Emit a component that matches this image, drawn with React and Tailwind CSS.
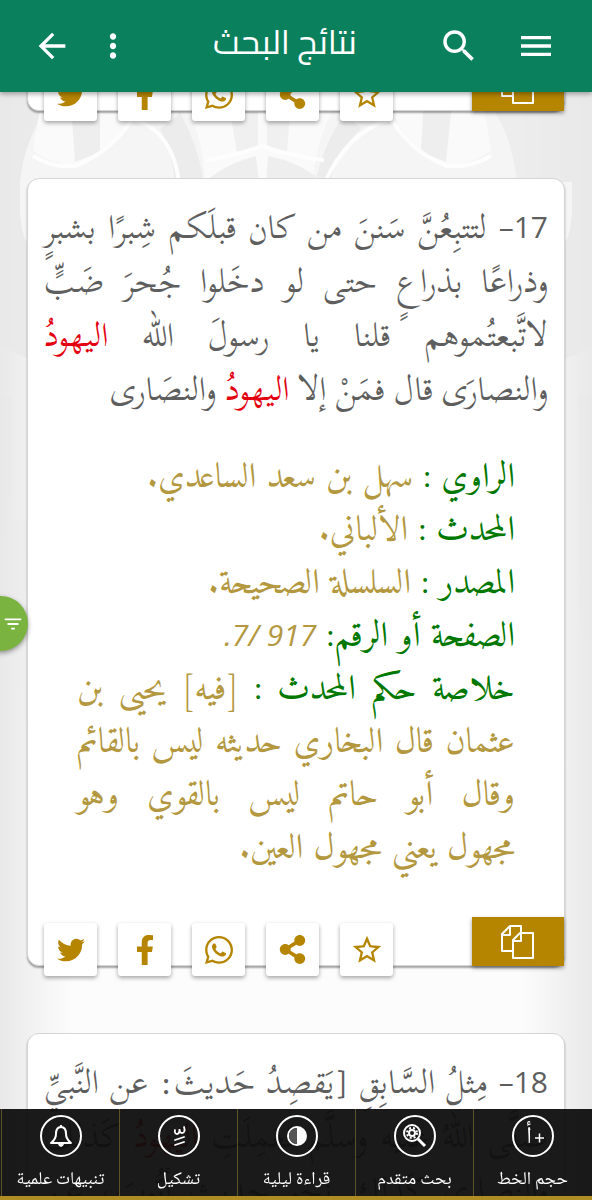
import { MdMenu, MdSearch, MdMoreVert, MdArrowBack, MdFilterList, MdStarBorder } from 'react-icons/md';
import { FaTwitter, FaFacebookF, FaWhatsapp, FaShareAlt } from 'react-icons/fa';

const shareActions = [
  { label: 'المفضلة', Icon: MdStarBorder, size: 34 },
  { label: 'مشاركة', Icon: FaShareAlt, size: 29 },
  { label: 'واتساب', Icon: FaWhatsapp, size: 32 },
  { label: 'فيسبوك', Icon: FaFacebookF, size: 30 },
  { label: 'تويتر', Icon: FaTwitter, size: 28 },
];

function CopyIcon() {
  return (
    <svg width="34" height="34" viewBox="0 0 34 34" fill="none" stroke="#fff" strokeWidth="2" strokeLinejoin="round" aria-hidden="true">
      <path d="M12 26H1V9l8-8h11v7M1 10h8V1" />
      <path d="M12 15l7-7h13v25H12zM12 16h8V8" />
    </svg>
  );
}

function CardActions() {
  return (
    <footer className="flex h-12 items-start justify-between pl-4">
      <button type="button" aria-label="نسخ" className="flex h-[49px] w-[92px] items-center justify-center bg-[#b58500] shadow-[0_2px_4px_rgba(0,0,0,0.4)]">
        <CopyIcon />
      </button>
      <div className="flex gap-[21px] pt-[6px]">
        {shareActions.map(({ label, Icon, size }) => (
          <button key={label} type="button" aria-label={label} className="flex h-[53px] w-[53px] items-center justify-center rounded-[3px] bg-white text-[#b58500] shadow-[0_2px_4px_rgba(0,0,0,0.35)]">
            <Icon size={size} />
          </button>
        ))}
      </div>
    </footer>
  );
}

function Card({ className = '', children }) {
  return (
    <article className={`mx-[27px] rounded-xl border border-[#d5d5d5] bg-white shadow-[0_2px_2px_rgba(0,0,0,0.35)] ${className}`}>
      {children}
      <CardActions />
    </article>
  );
}

function Num({ children }) {
  return <span className="font-['Open_Sans','Noto_Sans',sans-serif] text-[30px] leading-none">{children}</span>;
}

function Hadith({ number, children }) {
  return (
    <p className="px-4 pt-[22px] text-justify font-['Scheherazade_New','Amiri',serif] text-[33px] leading-[54px] text-[#5e5e5e]">
      <Num>{number}–</Num> {children}
    </p>
  );
}

function Hit({ children }) {
  return <mark className="bg-transparent text-[#e3000f]">{children}</mark>;
}

function Phrase({ children }) {
  return <span className="whitespace-nowrap">{children}</span>;
}

function Field({ label, children }) {
  return (
    <div>
      <dt className="inline text-[#007800]">{label}</dt>{' '}
      <dd className="inline">{children}</dd>
    </div>
  );
}

function Backdrop() {
  return (
    <svg className="absolute inset-0 -z-10 h-full w-full" viewBox="0 92 592 1108" preserveAspectRatio="none" aria-hidden="true">
      <defs>
        <linearGradient id="edge" x1="0" x2="1" y1="0" y2="0">
          <stop offset="0" stopColor="#e9e9e9" />
          <stop offset="0.12" stopColor="#fcfcfc" />
          <stop offset="0.88" stopColor="#fcfcfc" />
          <stop offset="1" stopColor="#e9e9e9" />
        </linearGradient>
        <linearGradient id="fade" x1="0" x2="0" y1="0" y2="1">
          <stop offset="0" stopColor="#e8e8e8" />
          <stop offset="1" stopColor="#e8e8e8" stopOpacity="0" />
        </linearGradient>
      </defs>
      <rect y="92" width="592" height="1108" fill="url(#edge)" />
      <path d="M0 92h592v252q-14 12-28 14H28q-14-4-28-14z" fill="#e9e9e9" opacity="0.8" />
      <path d="M20 182q4-40 25-70h450q18 30 22 70h55v30q-2 30-10 32H30q-8-2-10-32z" fill="#f5f5f5" />
      <path d="M33 150q4-30 12-58h95q-12 48-65 74-30-4-42-16zM491 150q-4-30-12-58h-95q12 48 63 74 32-4 44-16z" fill="#fafafa" />
      <path d="M70 92h30v60l-25 10zM453 92h-29l-3 60 25 10z" fill="#eee" />
      <path d="M180 92h165q-30 40-32 90H205q-2-50-25-90z" fill="#fafafa" />
      <path d="M160 128q12-6 20-16 18 34 24 70h-29q-3-30-15-54zM362 128q-10-6-16-16-24 34-30 70h14q6-30 32-54z" fill="#ececec" />
      <path d="M230 112h28v34l-21 7zM267 112h23l-3 41-20-7z" fill="#f0f0f0" />
      <path d="M205 182q20-18 51-26l3 26zM266 182l2-26q32 6 55 26z" fill="#eee" />
      <path d="M33 156q20 12 42 10 38-14 62-54M491 156q-20 12-44 10-38-14-60-54M137 120q36 14 42 62M387 120q-40 14-62 62M205 160q30-4 57-14 27 10 62 14" fill="none" stroke="#fdfdfd" strokeWidth="4" />
      <path d="M0 395h12v240H0zM12 520h18v235l-18 10zM592 395h-14v240h14z" fill="url(#fade)" opacity="0.5" />
    </svg>
  );
}

const ring = { fill: 'none', stroke: '#fff', strokeWidth: 2 };

const tools = [
  {
    label: 'حجم الخط',
    art: (
      <>
        <text x="18" y="29" fontSize="24" fill="#fff" textAnchor="middle" className="font-['Noto_Naskh_Arabic','DejaVu_Sans',sans-serif]">أ</text>
        <path d="M24 24h9M28.500 19.500v9" stroke="#fff" strokeWidth="1.500" />
      </>
    ),
  },
  {
    label: 'بحث متقدم',
    art: (
      <>
        <circle cx="19" cy="19" r="8" {...ring} />
        <circle cx="19" cy="19" r="3" {...ring} />
        <circle cx="19" cy="19" r="5" {...ring} strokeDasharray="2 2" />
        <path d="M25 25l7 7" stroke="#fff" strokeWidth="3" />
      </>
    ),
  },
  {
    label: 'قراءة ليلية',
    art: (
      <>
        <circle cx="22" cy="22" r="9" {...ring} />
        <path d="M22 13a9 9 0 0 1 0 18z" fill="#fff" />
        <path d="M22 14a8 8 0 0 0 0 16z" fill="#555" />
      </>
    ),
  },
  {
    label: 'تشكيل',
    art: (
      <g fill="none" stroke="#fff" strokeWidth="1.800" strokeLinecap="round">
        <path d="M27 13c1.500 4 0 6-2 6s-2.500-2-2.500-4c0 3-.5 5-2.500 5s-2.500-2-2-4" />
        <path d="M18 26l9-3M18 31l9-3" />
      </g>
    ),
  },
  {
    label: 'تنبيهات علمية',
    art: (
      <>
        <path d="M12 29q5-4 5-9 0-7 5-7t5 7q0 5 5 9zM22 13v-2" {...ring} strokeLinejoin="round" />
        <path d="M19 30h6q-1 3-3 3t-3-3z" fill="#fff" />
      </>
    ),
  },
];

function Toolbar() {
  return (
    <nav className="fixed inset-x-0 bottom-0 z-20 flex h-[91px] border-b-4 border-[#b08c25] bg-[#0e0e0e]/95 px-px">
      {tools.map(({ label, art }) => (
        <button key={label} type="button" className="flex flex-1 flex-col items-center border-l border-[#5c5428] pt-[5px] text-white">
          <svg width="44" height="44" viewBox="0 0 44 44" aria-hidden="true">
            <circle cx="22" cy="22" r="20" {...ring} />
            {art}
          </svg>
          <span className="mt-2 font-['Noto_Naskh_Arabic','DejaVu_Sans',sans-serif] text-[18px] leading-7 whitespace-nowrap">{label}</span>
        </button>
      ))}
    </nav>
  );
}

export default function App() {
  return (
    <div dir="rtl" lang="ar" className="flex h-screen flex-col overflow-hidden">
      <header className="z-20 flex h-[92px] shrink-0 items-center justify-between bg-[#0a805d] px-9 text-white shadow-[0_2px_5px_rgba(0,0,0,0.35)]">
        <div className="flex items-center gap-9">
          <button type="button" aria-label="القائمة"><MdMenu size={40} /></button>
          <button type="button" aria-label="بحث"><MdSearch size={42} /></button>
        </div>
        <h1 className="pb-2 font-['Cairo','DejaVu_Sans',sans-serif] text-[34px] leading-[48px]">نتائج البحث</h1>
        <div className="-ml-1 flex items-center gap-[22px]">
          <button type="button" aria-label="المزيد"><MdMoreVert size={38} /></button>
          <button type="button" aria-label="رجوع"><MdArrowBack size={40} /></button>
        </div>
      </header>

      <main className="relative isolate flex-1 overflow-hidden">
        <Backdrop />
        <Card className="-mt-[31px]" />

        <Card className="mt-[67px]">
          <Hadith number="17">
            لتتبِعُنَّ سَننَ من كان قبلَكم شِبرًا بشبرٍ وذراعًا بذراعٍ حتى لو دخَلوا جُحرَ ضَبٍّ لاتَّبعتُموهم قلنا يا رسولَ الله <Hit>اليهودُ</Hit> <Phrase>والنصارَى قال</Phrase> فمَنْ إلا <Hit>اليهودُ</Hit> والنصَارى
          </Hadith>
          <dl className="mt-[35px] mb-[41px] px-[49px] text-justify font-['Amiri','Scheherazade_New',serif] text-[35px] leading-[53px] text-[#b3983f]">
            <Field label="الراوي :">سهل بن سعد الساعدي.</Field>
            <Field label="المحدث :">الألباني.</Field>
            <Field label="المصدر :">السلسلة الصحيحة.</Field>
            <Field label="الصفحة أو الرقم:"><i><Num>917 /7.</Num></i></Field>
            <Field label="خلاصة حكم المحدث :">[فيه] يحيى بن عثمان قال البخاري حديثه ليس بالقائم وقال أبو حاتم ليس بالقوي وهو <Phrase>مجهول يعني</Phrase> مجهول العين.</Field>
          </dl>
        </Card>

        <Card className="mt-[67px]">
          <Hadith number="18">
            مِثلُ السَّابِقِ [يَقصِدُ حَديثَ: عن النَّبيِّ صلَّى اللهُ عليه وسلَّمَ فعَمِلَتِ <Hit>اليَهودُ</Hit> كَذلك والنَّصارى كَذلك نَحو حديث أيُّوبَ، عن نافع]
          </Hadith>
        </Card>
      </main>

      <button type="button" aria-label="تصفية" className="fixed top-[596px] -left-[27px] z-10 flex h-[55px] w-[55px] items-center justify-start rounded-full bg-[#7ab33f] pr-1 text-white shadow-[0_2px_5px_rgba(0,0,0,0.4)]">
        <MdFilterList size={22} />
      </button>
      <Toolbar />
    </div>
  );
}
